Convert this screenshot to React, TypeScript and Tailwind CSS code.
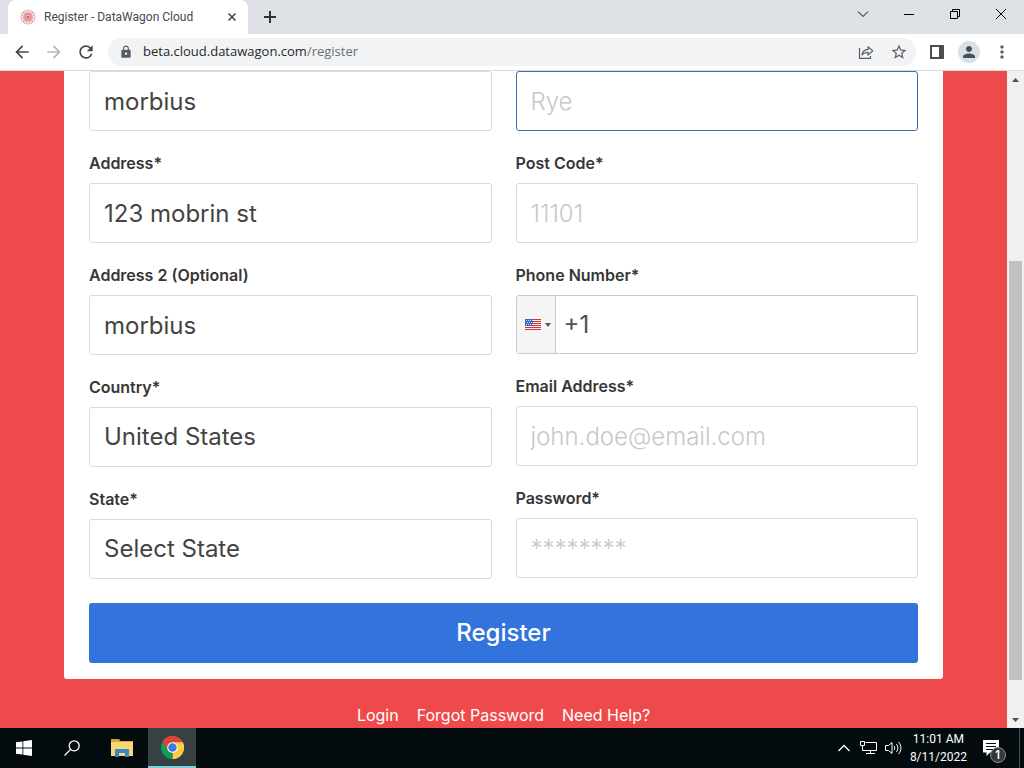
import type { ComponentProps, ReactNode } from "react"
import { MdArrowBack, MdArrowForward, MdLock, MdMoreVert, MdPerson, MdRefresh, MdStarBorder } from "react-icons/md"

const FIELD =
  "block w-full h-[60px] rounded-[3px] border bg-white px-3.5 text-2xl text-[#444] placeholder:text-[#c8c8c8] placeholder-shown:font-light outline-none appearance-none"

const PETALS = [0, 30, 60, 90, 120, 150]

function Favicon() {
  return (
    <svg viewBox="0 0 16 16" className="size-4 shrink-0" fill="none" stroke="#d5787c" strokeWidth="0.6">
      {PETALS.map((deg) => (
        <ellipse key={deg} cx="8" cy="8" rx="7.4" ry="2.4" transform={`rotate(${deg} 8 8)`} />
      ))}
      <circle cx="8" cy="8" r="1.5" fill="#d0555b" stroke="none" />
    </svg>
  )
}

function TabStrip() {
  return (
    <div className="flex h-[34px] shrink-0 bg-[#dee1e6] pl-2">
      <div className="flex w-60 items-center rounded-t-lg bg-white pl-3 pr-2">
        <Favicon />
        <span className="ml-2 flex-1 whitespace-nowrap font-['Roboto',sans-serif] text-xs text-[#45494d]">Register - DataWagon Cloud</span>
        <button type="button" aria-label="Close tab" className="flex size-4 items-center justify-center">
          <svg viewBox="0 0 8 8" className="size-2" stroke="#3c4043" strokeWidth="1.5">
            <path d="M0.5 0.5l7 7M7.5 0.5l-7 7" />
          </svg>
        </button>
      </div>
      <button type="button" aria-label="New tab" className="ml-4 flex items-center">
        <svg viewBox="0 0 12 12" className="size-3" stroke="#303336" strokeWidth="2">
          <path d="M6 0v12M0 6h12" />
        </svg>
      </button>
      <div className="ml-auto flex h-7 items-center text-black">
        <WindowButton label="Search tabs"><path d="M1 3.5l5 5 5-5" /></WindowButton>
        <WindowButton label="Minimize"><path d="M1 6.5h10" /></WindowButton>
        <WindowButton label="Restore"><path d="M1.5 3.5h7v7h-7zM3.5 3.5v-2h7v7h-2" /></WindowButton>
        <WindowButton label="Close"><path d="M1 1l10 10M11 1L1 11" /></WindowButton>
      </div>
    </div>
  )
}

function WindowButton({ label, children }: { label: string; children: ReactNode }) {
  return (
    <button type="button" aria-label={label} className="flex h-7 w-[46px] items-center justify-center">
      <svg viewBox="0 0 12 12" className="size-3" fill="none" stroke="currentColor">{children}</svg>
    </button>
  )
}

function Toolbar() {
  return (
    <div className="flex h-[37px] shrink-0 items-center border-b border-[#d8dadd] bg-white pl-3 pr-3 text-[#5a5e62]">
      <button type="button" aria-label="Back" className="mr-3 text-[#45494d]"><MdArrowBack className="size-5" /></button>
      <button type="button" aria-label="Forward" className="mr-3 text-[#b4b7ba]"><MdArrowForward className="size-5" /></button>
      <button type="button" aria-label="Reload" className="mr-3 text-[#45494d]"><MdRefresh className="size-5" /></button>
      <div className="flex h-7 flex-1 items-center rounded-full bg-[#f1f3f4] pl-[11px] pr-2">
        <MdLock className="size-3.5" />
        <span className="ml-2.5 text-[13px] text-[#6b6f73]">
          <span className="text-[#26292c]">beta.cloud.datawagon.com</span>/register
        </span>
        <button type="button" aria-label="Share" className="ml-auto mr-4">
          <svg viewBox="0 0 16 16" className="size-4" fill="none" stroke="currentColor" strokeWidth="1.2" strokeLinejoin="round">
            <path d="M1.5 4v10.4h11V12" />
            <path d="M4 11c.4-3.600 2.600-5.400 6-5.600V2.800l4.800 4.100-4.800 4.100V8.400C7.500 8.300 5.600 9 4 11z" />
          </svg>
        </button>
        <button type="button" aria-label="Bookmark this page"><MdStarBorder className="size-[18px]" /></button>
      </div>
      <button type="button" aria-label="Side panel" className="mx-3.5">
        <svg viewBox="0 0 14 14" className="size-3.5" fill="none" stroke="#4b4f53" strokeWidth="2">
          <path d="M1 1h12v12H1z" />
          <path d="M9 1h4v12H9z" fill="#4b4f53" stroke="none" />
        </svg>
      </button>
      <button type="button" aria-label="Profile" className="mr-3 flex size-[22px] items-center justify-center rounded-full bg-[#dadfe4] text-[#41505c]">
        <MdPerson className="size-[18px]" />
      </button>
      <button type="button" aria-label="Menu"><MdMoreVert className="size-5" /></button>
    </div>
  )
}

interface FieldProps {
  id: string
  label: string
  children: ReactNode
}

function Field({ id, label, children }: FieldProps) {
  return (
    <div className="flex flex-col gap-2">
      <label htmlFor={id} className="text-base font-semibold text-[#363636]">{label}</label>
      {children}
    </div>
  )
}

function TextInput({ className = "border-[#dbdbdb]", ...props }: ComponentProps<"input">) {
  return <input {...props} className={`${FIELD} ${className}`} />
}

function Flag() {
  return (
    <svg viewBox="0 0 16 11" className="h-[11px] w-4">
      <rect width="16" height="11" fill="#f8eeee" />
      <path d="M0 .5h16M0 2.500h16M0 4.500h16M0 6.500h16M0 8.500h16M0 10.500h16" stroke="#d5343f" />
      <rect width="8" height="7" fill="#3f66c4" />
      <path d="M1 1.500h7M2 3.500h6M1 5.500h7" stroke="#d5def5" strokeDasharray="1 1" />
    </svg>
  )
}

function PhoneInput() {
  return (
    <div className="flex h-[59px] overflow-hidden rounded-[3px] border border-[#cacaca]">
      <button type="button" aria-label="Country code" className="flex w-[39px] shrink-0 items-center gap-1 border-r border-[#cacaca] bg-[#f5f5f5] pl-2">
        <Flag />
        <svg viewBox="0 0 6 4" className="h-1 w-1.5"><path d="M0 0h6L3 4z" fill="#555" /></svg>
      </button>
      <input id="phone" type="tel" defaultValue="+1" className="min-w-0 flex-1 bg-white px-2 text-2xl text-[#495057] outline-none" />
    </div>
  )
}

function RegisterForm() {
  return (
    <form className="rounded-b-[3px] bg-white px-[25px] pb-4" onSubmit={(e) => e.preventDefault()}>
      <div className="grid grid-cols-2 gap-6">
        <div className="flex flex-col gap-5">
          <TextInput aria-label="Company" defaultValue="morbius" />
          <Field id="address" label="Address*">
            <TextInput id="address" defaultValue="123 mobrin st" />
          </Field>
          <Field id="address2" label="Address 2 (Optional)">
            <TextInput id="address2" defaultValue="morbius" />
          </Field>
          <Field id="country" label="Country*">
            <select id="country" className={`${FIELD} border-[#dbdbdb]`}>
              <option>United States</option>
            </select>
          </Field>
          <Field id="state" label="State*">
            <select id="state" className={`${FIELD} border-[#dbdbdb]`}>
              <option>Select State</option>
            </select>
          </Field>
        </div>
        <div className="flex flex-col gap-5">
          <TextInput aria-label="City" placeholder="Rye" className="border-[#3f6cae]" />
          <Field id="postcode" label="Post Code*">
            <TextInput id="postcode" placeholder="11101" />
          </Field>
          <Field id="phone" label="Phone Number*">
            <PhoneInput />
          </Field>
          <Field id="email" label="Email Address*">
            <TextInput id="email" type="email" placeholder="john.doe@email.com" />
          </Field>
          <Field id="password" label="Password*">
            <TextInput id="password" type="password" placeholder="********" />
          </Field>
        </div>
      </div>
      <button type="submit" className="mt-6 h-[60px] w-full rounded-[3px] bg-[#3273dc] text-2xl font-medium text-white">
        Register
      </button>
    </form>
  )
}

function Scrollbar() {
  return (
    <div className="flex w-[17px] shrink-0 flex-col items-center bg-[#f1f1f1]">
      <div className="flex h-[17px] items-center">
        <svg viewBox="0 0 7 4" className="h-1 w-[7px]"><path d="M0 4h7L3.500 0z" fill="#505050" /></svg>
      </div>
      <div className="flex w-[13px] flex-1 flex-col">
        <div className="flex-[173]" />
        <div className="flex-[420] bg-[#c1c1c1]" />
        <div className="flex-[31]" />
      </div>
      <div className="flex h-[17px] items-center">
        <svg viewBox="0 0 7 4" className="h-1 w-[7px]"><path d="M0 0h7L3.500 4z" fill="#505050" /></svg>
      </div>
    </div>
  )
}

function ChromeLogo() {
  return (
    <svg viewBox="0 0 48 48" className="size-[23px]">
      <path d="M24 24L3.200 12A24 24 0 0 1 44.800 12z" fill="#db4437" />
      <path d="M24 24L44.800 12A24 24 0 0 1 24 48z" fill="#ffcd40" />
      <path d="M24 24V48A24 24 0 0 1 3.200 12z" fill="#0f9d58" />
      <path d="M24 13H45.300A24 24 0 0 0 3.200 12L14.500 29.500z" fill="#db4437" />
      <path d="M45.300 13H24L33.500 29.500 23 48A24 24 0 0 0 45.300 13z" fill="#ffcd40" />
      <circle cx="24" cy="24" r="11" fill="#fff" />
      <circle cx="24" cy="24" r="8.800" fill="#3f76e8" />
    </svg>
  )
}

function Taskbar() {
  return (
    <div className="flex h-10 shrink-0 bg-[#030b0e] text-white">
      <button type="button" aria-label="Start" className="flex w-12 items-center justify-center">
        <svg viewBox="0 0 16 16" className="size-4" fill="currentColor">
          <path d="M0 2.300L6.500 1.400V7.600H0zM7.300 1.300L16 0V7.600H7.300zM0 8.400H6.500V14.600L0 13.700zM7.300 8.400H16V16L7.300 14.700z" />
        </svg>
      </button>
      <button type="button" aria-label="Search" className="flex w-12 items-center justify-center">
        <svg viewBox="0 0 16 16" className="size-4" fill="none" stroke="currentColor" strokeWidth="1.3">
          <circle cx="10.200" cy="5.800" r="5" />
          <path d="M6.500 9.500L.5 15.500" />
        </svg>
      </button>
      <button type="button" aria-label="File Explorer" className="flex w-[52px] items-center justify-center">
        <svg viewBox="0 0 22 18" className="h-[18px] w-[22px]">
          <path d="M0 0h8l1.500 2H22v3H0z" fill="#d9a33a" />
          <path d="M0 3h22v14H0z" fill="#f8d775" />
          <path d="M4 10h14v8h-4v-4H8v4H4z" fill="#3b86c6" />
        </svg>
      </button>
      <button type="button" aria-label="Google Chrome" className="flex w-12 items-center justify-center border-b-2 border-[#76d0e0] bg-[#384142]">
        <ChromeLogo />
      </button>
      <div className="ml-auto flex items-center">
        <button type="button" aria-label="Show hidden icons">
          <svg viewBox="0 0 12 8" className="h-2 w-3" fill="none" stroke="currentColor" strokeWidth="1.3"><path d="M.5 7L6 1.500 11.500 7" /></svg>
        </button>
        <svg viewBox="0 0 17 14" className="ml-2.5 h-3.5 w-[17px]" fill="none" stroke="currentColor">
          <path d="M5.500 1.500h11v8h-14v-5M10.500 9.500v3M6 12.500h9M.5.500h4v4h-4z" />
        </svg>
        <svg viewBox="0 0 17 14" className="ml-2 h-3.5 w-[17px]" fill="none" stroke="currentColor">
          <path d="M.5 4.500h3l3.500-3v11l-3.500-3h-3zM9 5c1 1.200 1 2.800 0 4M11.300 3c2.100 2.400 2.100 5.600 0 8M13.600 1c3.100 3.600 3.100 8.400 0 12" />
        </svg>
        <div className="ml-2 text-center font-['Roboto',sans-serif] text-xs leading-[18px]">
          <div>11:01 AM</div>
          <div>8/11/2022</div>
        </div>
        <button type="button" aria-label="Notifications, 1 new" className="relative ml-4 mr-3 flex size-6 items-center">
          <svg viewBox="0 0 16 16" className="size-4">
            <path d="M0 0h16v12.500H7L3.500 16v-3.500H0z" fill="#fff" />
            <path d="M3 3.500h10M3 6.500h10M3 9.500h7" stroke="#030b0e" />
          </svg>
          <span className="absolute left-[7px] top-[11px] flex size-4 items-center justify-center rounded-full border border-[#8b9092] bg-[#343a3c] text-xs font-semibold">1</span>
        </button>
        <div className="h-10 w-[5px] border-l border-[#4b5154]" />
      </div>
    </div>
  )
}

export default function App() {
  return (
    <div className="flex h-screen flex-col overflow-hidden font-['Open_Sans','Noto_Sans',sans-serif]">
      <TabStrip />
      <Toolbar />
      <div className="flex min-h-0 flex-1">
        <main className="min-w-0 flex-1 overflow-hidden bg-[#ee4a4b] px-16 font-['Inter',sans-serif]">
          <RegisterForm />
          <nav className="mt-6 flex justify-center gap-[18px] text-base text-white">
            <a href="#login">Login</a>
            <a href="#forgot">Forgot Password</a>
            <a href="#help">Need Help?</a>
          </nav>
        </main>
        <Scrollbar />
      </div>
      <Taskbar />
    </div>
  )
}
